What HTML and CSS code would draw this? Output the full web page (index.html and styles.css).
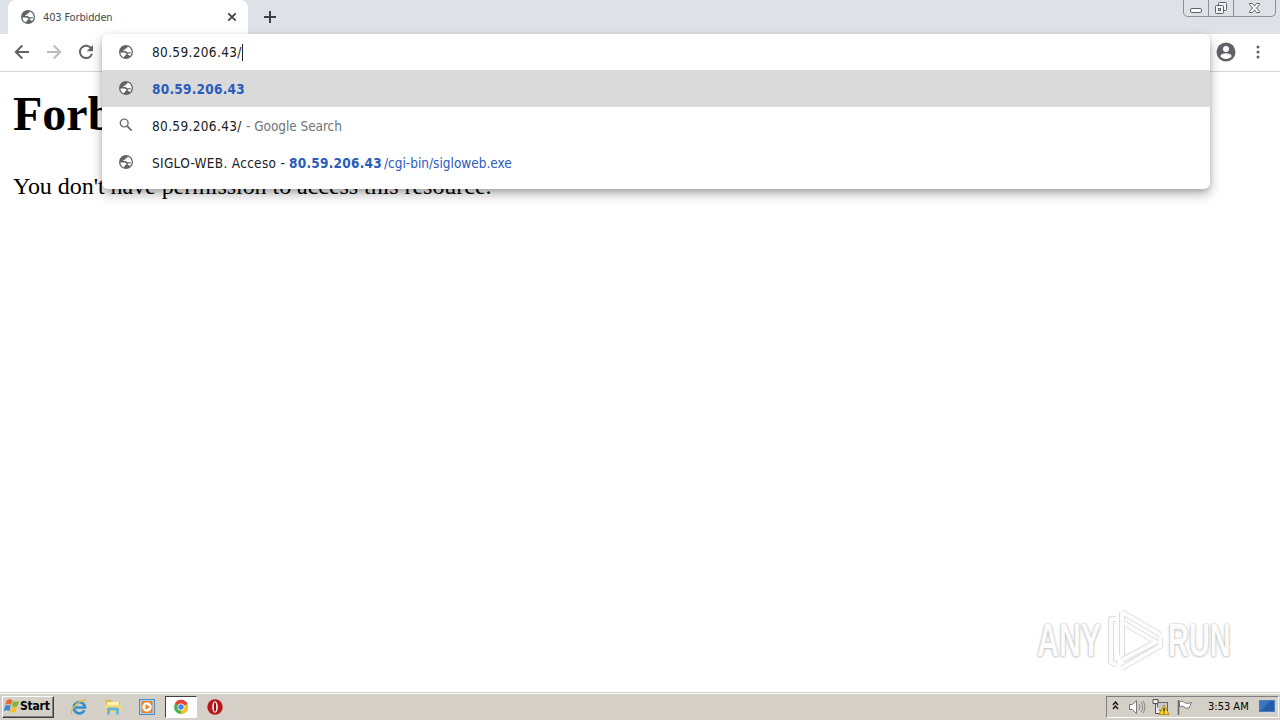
FILE: index.html
```html
<!DOCTYPE html>
<html lang="en">
<head>
    <meta charset="UTF-8">
    <meta name="viewport" content="width=device-width, initial-scale=1.0">
    <title>403 Forbidden</title>
    <link rel="stylesheet" href="styles.css">
</head>
<body>
    <svg class="defs">
        <symbol id="globe" viewBox="0 0 16 16">
            <circle cx="8" cy="8" r="7" fill="#5f6368"/>
            <path d="M2.400 8.600h3.800c1.400 0 2.300.8 2.300 2.100H7.200v1.500H6v1.400C4 12.900 2.600 11 2.400 8.600zM9.300 2.500c2.800.6 4.500 2.900 4.400 5.500-.1 1.800-.8 3.300-2 4.300-.2-.8-.7-1.300-1.500-1.300h-.4V9.600h1.500c1 0 1.600-.5 1.600-1.300H9.200L7.700 6.900H5.400V5.700h2V4.200h1.900z" fill="#fff"/>
        </symbol>
    </svg>

    <header class="tab-strip">
        <div class="tab">
            <svg class="globe"><use href="#globe"/></svg>
            <span class="tab-title">403 Forbidden</span>
            <svg class="tab-close" viewBox="0 0 10 10"><path d="M1.300 1.300l7.400 7.400M8.700 1.300L1.300 8.700" stroke="#3c4043" stroke-width="1.700"/></svg>
        </div>
        <svg class="new-tab" viewBox="0 0 12 12"><path d="M6 0v12M0 6h12" stroke="#3c4043" stroke-width="2"/></svg>
        <div class="window-buttons">
            <span class="minimize"><svg width="13" height="18"><rect x=".5" y="8.500" width="11" height="4" rx="1.500" fill="#fff" stroke="#5b606b"/></svg></span>
            <span class="restore"><svg width="14" height="18"><g fill="#f4f5f7" stroke="#5b606b"><rect x="4.500" y="2.500" width="8" height="8" rx="1"/><rect x="1.500" y="5.500" width="8" height="8" rx="1"/><rect x="4.500" y="8.500" width="2" height="2"/></g></svg></span>
            <span class="close"><svg width="14" height="18"><path d="M1.500 3.500h3L6.500 6l2-2.500h3v1L8.500 8l3 3.500v1h-3l-2-2.500-2 2.500h-3v-1l3-3.500-3-3.500z" fill="#fff" stroke="#5b606b"/></svg></span>
        </div>
    </header>

    <nav class="toolbar">
        <svg class="back" viewBox="0 0 16 16"><path d="M15 8H2M8.300 1.500L1.800 8l6.500 6.500" fill="none" stroke="#5f6368" stroke-width="2"/></svg>
        <svg class="forward" viewBox="0 0 16 16"><path d="M1 8h13M7.700 1.500L14.200 8l-6.500 6.500" fill="none" stroke="#babcbe" stroke-width="2"/></svg>
        <svg class="reload" viewBox="0 0 16 16"><path d="M13.300 4.500A6.200 6.200 0 1 0 14 9.800" fill="none" stroke="#5f6368" stroke-width="2"/><path d="M15 1v6.300H8.700z" fill="#5f6368"/></svg>
        <svg class="profile" viewBox="0 0 20 20"><circle cx="10" cy="10" r="9.500" fill="#5f6368"/><circle cx="10" cy="7" r="3" fill="#fff"/><path d="M4.300 14.200c1.200-3.800 10.200-3.800 11.400 0-2.800 3.700-8.600 3.700-11.400 0z" fill="#fff"/></svg>
        <svg class="menu" viewBox="0 0 4 14"><g fill="#5f6368"><circle cx="2" cy="2" r="1.500"/><circle cx="2" cy="7" r="1.500"/><circle cx="2" cy="12" r="1.500"/></g></svg>
    </nav>

    <div class="omnibox">
        <div class="row input">
            <svg class="globe"><use href="#globe"/></svg>
            <span class="url">80.59.206.43/</span><i class="caret"></i>
        </div>
        <div class="row selected">
            <svg class="globe"><use href="#globe"/></svg>
            <b class="link">80.59.206.43</b>
        </div>
        <div class="row">
            <svg class="globe" viewBox="0 0 16 16"><circle cx="6.200" cy="6" r="3.900" fill="none" stroke="#6b6f73" stroke-width="1.400"/><path d="M9.100 9l4.600 4.600" stroke="#6b6f73" stroke-width="1.800"/></svg>
            <span class="url">80.59.206.43/</span><span class="hint">- Google Search</span>
        </div>
        <div class="row">
            <svg class="globe"><use href="#globe"/></svg>
            <span class="site">SIGLO-WEB. Acceso -</span><b class="link">80.59.206.43</b><span class="path">/cgi-bin/sigloweb.exe</span>
        </div>
    </div>

    <main class="page">
        <h1>Forbidden</h1>
        <p>You don't have permission to access this resource.</p>
        <div class="watermark">
            <span class="any">ANY</span>
            <svg viewBox="0 0 60 64"><g fill="none" stroke-linejoin="round"><path class="edge" d="M10 11H5v43l6 3M16 4v43M16 4l39 23M16 14l34 20-34 18M16 60l38-22v-8"/><path class="face" d="M10 11H5v43l6 3M16 4v43M16 4l39 23M16 14l34 20-34 18M16 60l38-22v-8"/></g></svg>
            <span class="run">RUN</span>
        </div>
    </main>

    <footer class="taskbar">
        <div class="start">
            <svg viewBox="0 0 18 16"><path d="M4 2q3-2.500 6 0L8.500 7q-3-2-6 0z" fill="#e9652b"/><path d="M10.700 2.500q3 2 6.500 0L15.500 8q-3 2-6 0z" fill="#7db63b"/><path d="M2.200 8q3-2 6 0l-1.500 5.500q-3-2-6 0z" fill="#3a88d0"/><path d="M9 8.500q3 2 6 0L13.500 14q-3 2-6 0z" fill="#f6bf26"/></svg>
            <span>Start</span>
        </div>
        <div class="launch">
            <svg viewBox="0 0 18 18"><path d="M14.500 12.200A5.600 5.600 0 1 1 15 9.500H5" fill="none" stroke="#2d91d5" stroke-width="2.700"/><path d="M2 16C-1 12 10 1 16 2.500" fill="none" stroke="#e9bb3b" stroke-width="1.400"/></svg>
        </div>
        <div class="launch">
            <svg viewBox="0 0 18 18"><path d="M2 2h5l1 2h8v10H2z" fill="#dcb94e"/><path d="M3 4h12v5H3z" fill="#fff3a9"/><path d="M1 7h16v7H1z" fill="#f2d980"/><path d="M3 16.500v-5q0-2 2-2h8q2 0 2 2v5h-3v-4H6v4z" fill="#66b4dc"/></svg>
        </div>
        <div class="launch">
            <svg viewBox="0 0 18 18"><rect x="1.500" y="1.500" width="15" height="15" fill="#a9cff0" stroke="#4b8cc9"/><rect x="3.500" y="3" width="11" height="12" rx="1" fill="#ef8120"/><circle cx="9" cy="9" r="4.700" fill="#fff"/><path d="M7.500 6l4.500 3-4.500 3z" fill="#ef8120"/></svg>
        </div>
        <div class="launch active">
            <svg viewBox="0 0 18 18"><circle cx="9" cy="9" r="7" fill="#4caf50"/><path d="M9 9L3 5.400A7 7 0 0 1 15.500 6z" fill="#e54335"/><path d="M9 9l6.500-3A7 7 0 0 1 9 16z" fill="#fbc116"/><circle cx="9" cy="9" r="3.500" fill="#fff"/><circle cx="9" cy="9" r="2.700" fill="#4285f4"/></svg>
        </div>
        <div class="launch">
            <svg viewBox="0 0 18 18"><circle cx="9" cy="9" r="7.700" fill="#b91419"/><ellipse cx="9" cy="9" rx="2.800" ry="5.700" fill="#fff"/><ellipse cx="9" cy="9" rx="1.200" ry="4.700" fill="#8f1215"/></svg>
        </div>
        <div class="tray">
            <svg class="chevrons" viewBox="0 0 7 9"><path d="M1 4l2.500-3L6 4M1 8l2.500-3L6 8" fill="none" stroke="#111" stroke-width="1.400"/></svg>
            <svg class="icon" viewBox="0 0 18 18"><path d="M1.500 6.500h3l4-4v13l-4-4h-3z" fill="#fff" stroke="#777"/><path d="M11 6q2 3 0 6M13 4q3.500 5 0 10M15 3q4 6 0 12" fill="none" stroke="#888"/></svg>
            <svg class="icon" viewBox="0 0 18 18"><rect x="5.500" y="4.500" width="10" height="8" fill="#c8c8c8" stroke="#666"/><path d="M1 1.500h5v4H1zM3.500 5.500v10h5" fill="#eee" stroke="#555"/><path d="M12 7l5 9.500H7z" fill="#ffd629" stroke="#b69112"/><path d="M12 10v3.500M12 14.500v1" stroke="#222" stroke-width="1.300"/></svg>
            <svg class="icon" viewBox="0 0 18 18"><path d="M2.500 2v15" stroke="#666" stroke-width="1.500"/><path d="M3.500 3.500q3-1 5 1t7 0L13 10q-3 1-5-1t-4.500 0z" fill="#fff" stroke="#777"/></svg>
            <span class="clock">3:53 AM</span>
            <svg class="desktop" viewBox="0 0 16 14"><rect x=".5" y=".5" width="15" height="11" fill="#235ca8" stroke="#4a7db9"/><path d="M1 1h10L3 10H1z" fill="#3877c2"/><path d="M1 12.500h14" stroke="#c5d7e8"/></svg>
        </div>
    </footer>
</body>
</html>
```

FILE: styles.css
```css
* {
    margin: 0;
    padding: 0;
    box-sizing: border-box;
}

body {
    width: 1280px;
    height: 720px;
    overflow: hidden;
    position: relative;
    display: flex;
    flex-direction: column;
    background: #fff;
    font-family: "DejaVu Sans Condensed", "DejaVu Sans", sans-serif;
    font-stretch: condensed;
}

svg {
    display: block;
    flex: none;
}

.defs {
    display: none;
}

.globe {
    width: 16px;
    height: 16px;
}

.tab-strip {
    height: 34px;
    background: #dee1e6;
    display: flex;
    padding-left: 8px;
}

.tab {
    width: 240px;
    height: 34px;
    background: #fff;
    border-radius: 8px 8px 0 0;
    display: flex;
    align-items: center;
    padding: 0 11px 0 12px;
}

.tab-title {
    flex: 1;
    margin-left: 7px;
    font-size: 11px;
    letter-spacing: -0.15px;
    color: #45494d;
}

.tab-close {
    width: 10px;
    height: 10px;
}

.new-tab {
    width: 12px;
    height: 12px;
    margin: 11px 0 0 16px;
}

.window-buttons {
    display: flex;
    height: 17px;
    margin: 0 4px 0 auto;
    border: 1px solid #8b909a;
    border-top: 0;
    border-radius: 0 0 5px 5px;
}

.window-buttons span {
    display: flex;
    justify-content: center;
    width: 25px;
    border-left: 1px solid #8b909a;
}

.window-buttons .minimize {
    width: 24px;
    border-left: 0;
}

.window-buttons .close {
    width: 42px;
}

.toolbar {
    height: 38px;
    display: flex;
    align-items: center;
    padding: 0 20px 2px 14px;
    border-bottom: 1px solid #d5d7da;
}

.back, .forward, .reload {
    width: 16px;
    height: 16px;
    margin-right: 16px;
}

.profile {
    width: 20px;
    height: 20px;
    margin-left: auto;
}

.menu {
    width: 4px;
    height: 14px;
    margin-left: 20px;
}

.omnibox {
    position: absolute;
    z-index: 2;
    left: 102px;
    top: 34px;
    width: 1108px;
    height: 155px;
    background: #fff;
    border-radius: 6px;
    box-shadow: 0 5px 12px rgba(0, 0, 0, 0.3), 0 2px 4px rgba(0, 0, 0, 0.12);
}

.row {
    height: 37px;
    display: flex;
    align-items: center;
    padding-left: 16px;
    font-size: 13.5px;
    white-space: pre;
    color: #202124;
}

.row .globe {
    margin-right: 18px;
    margin-bottom: 1px;
}

.row.input {
    height: 36px;
}

.row.input .globe {
    margin-bottom: 0;
}

.row.selected {
    background: #dadada;
}

.url {
    width: 90px;
    letter-spacing: 0.35px;
}

.caret {
    width: 1px;
    height: 17px;
    background: #222;
}

.link {
    width: 95px;
    letter-spacing: 0.25px;
    color: #2a5cbd;
}

.hint {
    margin-left: 4px;
    letter-spacing: -0.05px;
    color: #707478;
}

.site {
    width: 137px;
    letter-spacing: 0.3px;
}

.path {
    letter-spacing: 0;
    color: #2a5cbd;
}

.page {
    flex: 1;
    position: relative;
    padding: 13px 13px;
    font-family: "Liberation Serif", serif;
    font-size: 24px;
    color: #000;
}

h1 {
    font-size: 48px;
    line-height: 58px;
}

p {
    margin-top: 29px;
    line-height: 28px;
    letter-spacing: -0.04px;
}

.watermark {
    position: absolute;
    left: 1037px;
    top: 536px;
    width: 197px;
    display: flex;
    align-items: center;
    font-family: "Liberation Sans", sans-serif;
    color: #fcfcfc;
    text-shadow: 0 0 2px #aaa, 0 1px 4px #ccc;
}

.watermark span {
    font-size: 46px;
    font-weight: bold;
    line-height: 60px;
    transform-origin: 0 50%;
}

.any {
    width: 69px;
    transform: scaleX(0.66);
}

.run {
    width: 64px;
    transform: scaleX(0.63);
}

.watermark svg {
    width: 60px;
    height: 64px;
    margin-right: 2px;
    overflow: visible;
}

.edge {
    stroke: #dedede;
    stroke-width: 6;
}

.face {
    stroke: #fcfcfc;
    stroke-width: 4;
}

.taskbar {
    height: 28px;
    background: #d4d0c8;
    border-top: 1px solid #d4d0c8;
    box-shadow: inset 0 1px #fff;
    display: flex;
    align-items: center;
    padding: 0 1px 0 2px;
}

.start {
    width: 52px;
    height: 22px;
    margin-right: 8px;
    padding-bottom: 1px;
    display: flex;
    align-items: center;
    border: 1px solid;
    border-color: #fff #404040 #404040 #fff;
    box-shadow: inset -1px -1px #808080;
    font-size: 12px;
    font-weight: bold;
    letter-spacing: -0.2px;
}

.start svg {
    width: 17px;
    height: 16px;
}

.launch {
    width: 34px;
    height: 22px;
    display: flex;
    align-items: center;
    justify-content: center;
}

.launch svg {
    width: 18px;
    height: 18px;
}

.launch.active {
    width: 32px;
    margin: 0 1px;
    background: #fff;
    border: 1px solid;
    border-color: #404040 #fff #fff #404040;
}

.tray {
    width: 173px;
    height: 22px;
    margin-left: auto;
    display: flex;
    align-items: center;
    border: 1px solid;
    border-color: #808080 #fff #fff #808080;
    padding-left: 5px;
}

.chevrons {
    width: 7px;
    height: 9px;
    margin: 0 9px 3px 0;
}

.icon {
    width: 18px;
    height: 18px;
    margin-right: 6px;
}

.clock {
    width: 51px;
    margin-left: 8px;
    font-size: 11px;
    letter-spacing: 0;
    white-space: nowrap;
}

.desktop {
    width: 16px;
    height: 14px;
}
```
